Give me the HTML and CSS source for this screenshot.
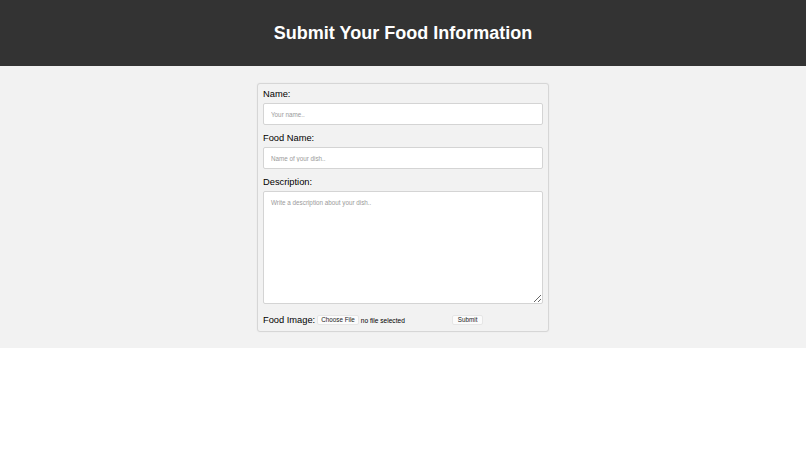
FILE: index.html
```html
<!DOCTYPE html>
<html>
<head>
<meta charset="utf-8">
<link rel="stylesheet" href="styles.css">
</head>
<body>
<header class="top">
  <h1 class="title">Submit Your Food Information</h1>
</header>
<main class="main">
  <form class="card">
    <label class="lbl">Name:</label>
    <input class="field" type="text" placeholder="Your name..">
    <label class="lbl">Food Name:</label>
    <input class="field" type="text" placeholder="Name of your dish..">
    <label class="lbl">Description:</label>
    <textarea class="field area" placeholder="Write a description about your dish.."></textarea>
    <div class="row">
      <span class="lbl-inline">Food Image:</span>
      <button type="button" class="btn">Choose File</button>
      <span class="nofile">no file selected</span>
      <button type="button" class="btn submit">Submit</button>
    </div>
  </form>
</main>
</body>
</html>
```
FILE: styles.css
```css
html, body {
  margin: 0;
  padding: 0;
  background: #ffffff;
  font-family: "Liberation Sans", Arial, sans-serif;
}
.top {
  background: #333333;
  height: 66px;
  display: flex;
  align-items: center;
  justify-content: center;
}
.title {
  margin: 0;
  color: #ffffff;
  font-size: 18px;
  font-weight: bold;
  line-height: 22px;
}
.main {
  background: #f2f2f2;
  padding: 17px 0 16px;
  display: flex;
  justify-content: center;
}
.card {
  width: 280px;
  padding: 4px 5px 3px;
  border: 1px solid #d6d6d6;
  border-radius: 3px;
  background: #f2f2f2;
  box-shadow: 0 0 2px rgba(0,0,0,0.06);
  display: flex;
  flex-direction: column;
}
.lbl {
  font-size: 9.3px;
  line-height: 13px;
  color: #000;
  margin-bottom: 2px;
}
.field {
  box-sizing: border-box;
  width: 280px;
  height: 22px;
  margin: 0 0 7px;
  padding: 0 7px;
  border: 1px solid #d4d4d4;
  border-radius: 2px;
  background: #fff;
  font-family: "Liberation Sans", Arial, sans-serif;
  font-size: 6.3px;
  outline: none;
}
.field::placeholder {
  color: #9a9a9a;
}
.area {
  height: 113px;
  padding: 7px 7px;
  margin-bottom: 8px;
  resize: vertical;
}
.row {
  display: flex;
  align-items: center;
  height: 16px;
}
.lbl-inline {
  font-size: 9.3px;
  color: #000;
  margin-right: 2px;
}
.btn {
  font-family: "Liberation Sans", Arial, sans-serif;
  font-size: 6.3px;
  color: #222;
  background: #fbfbfb;
  border: 1px solid #e6e6e6;
  border-radius: 2px;
  height: 10px;
  padding: 0 3px;
  line-height: 8px;
}
.nofile {
  font-size: 6.6px;
  color: #000;
  margin-left: 2px;
}
.submit {
  margin-left: 47px;
  padding: 0 5px;
}
```
